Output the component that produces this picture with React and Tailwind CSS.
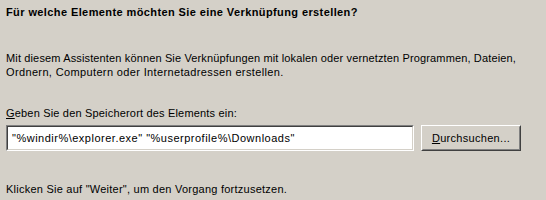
// Classic-theme shortcut wizard page: "Verknüpfung erstellen"
export default function App() {
  return (
    <div className="w-[546px] h-[200px] bg-[#d4d0c8] text-black text-[11px] leading-[14px] font-['Liberation_Sans',Tahoma,sans-serif] pl-[6px] pt-[5px] flex flex-col">
      <h1 className="font-bold tracking-[0.4px]">Für welche Elemente möchten Sie eine Verknüpfung erstellen?</h1>

      <p className="mt-[32px]">
        <span className="tracking-[0.14px]">
          Mit diesem Assistenten können Sie Verknüpfungen mit lokalen oder vernetzten Programmen, Dateien,
        </span>
        <br />
        <span className="tracking-[0.36px]">Ordnern, Computern oder Internetadressen erstellen.</span>
      </p>

      <label className="mt-[27px] tracking-[0.18px]">
        <span className="underline">G</span>eben Sie den Speicherort des Elements ein:
      </label>

      <div className="mt-[5px] flex gap-[7px]">
        {/* sunken text box */}
        <div className="w-[408px] h-[26px] border border-t-[#808080] border-l-[#808080] border-b-white border-r-white">
          <div className="h-full border border-t-[#404040] border-l-[#404040] border-b-[#d4d0c8] border-r-[#d4d0c8] bg-white flex items-center pl-[4px] tracking-[0.5px]">
            "%windir%\explorer.exe" "%userprofile%\Downloads"
          </div>
        </div>

        {/* raised push button */}
        <div className="w-[100px] h-[26px] border border-t-white border-l-white border-b-[#404040] border-r-[#404040]">
          <div className="h-full border border-t-[#d4d0c8] border-l-[#d4d0c8] border-b-[#808080] border-r-[#808080] flex items-center justify-center tracking-[0.3px]">
            <span>
              <span className="underline">D</span>urchsuchen...
            </span>
          </div>
        </div>
      </div>

      <p className="mt-[31px] tracking-[0.24px]">Klicken Sie auf "Weiter", um den Vorgang fortzusetzen.</p>
    </div>
  );
}
